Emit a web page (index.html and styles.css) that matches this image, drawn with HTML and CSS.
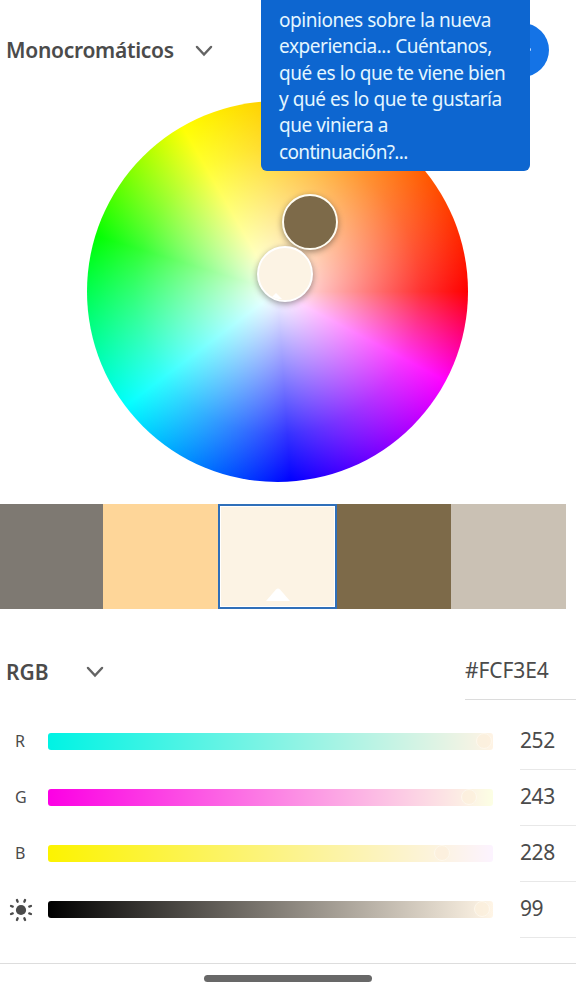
FILE: index.html
```html
<!DOCTYPE html>
<html lang="es">
<head>
<meta charset="utf-8">
<title>Rueda de color</title>
<link rel="stylesheet" href="styles.css">
</head>
<body>
<header class="header">
  <span class="harmony">Monocromáticos</span>
  <svg class="chevron" viewBox="0 0 18 12"><path d="M2 2l7 7.5 7-7.5"/></svg>
  <span class="help"><span class="help-mark"></span></span>
</header>
<aside class="tooltip">
  <p>opiniones sobre la nueva</p>
  <p>experiencia... Cuéntanos,</p>
  <p>qué es lo que te viene bien</p>
  <p>y qué es lo que te gustaría</p>
  <p>que viniera a</p>
  <p class="tip-end">continuación?...</p>
</aside>
<main>
  <div class="wheel">
    <span class="marker marker-brown"></span>
    <span class="marker marker-cream"><svg viewBox="0 0 24 12"><path d="M0 12L12 0l12 12z"/></svg></span>
  </div>
  <div class="swatches">
    <div class="swatch gray"></div>
    <div class="swatch peach"></div>
    <div class="swatch cream"><svg viewBox="0 0 24 13"><path d="M0 13L10 1.5q2-2 4 0L24 13z"/></svg></div>
    <div class="swatch brown"></div>
    <div class="swatch stone"></div>
  </div>
  <div class="mode">
    <span class="mode-name">RGB</span>
    <svg class="chevron" viewBox="0 0 18 12"><path d="M2 2l7 7.5 7-7.5"/></svg>
    <span class="hex">#FCF3E4</span>
  </div>
  <div class="row"><span class="label">R</span><div class="track red"><i class="knob"></i></div><span class="value">252</span></div>
  <div class="row"><span class="label">G</span><div class="track green"><i class="knob"></i></div><span class="value">243</span></div>
  <div class="row"><span class="label">B</span><div class="track blue"><i class="knob"></i></div><span class="value">228</span></div>
  <div class="row">
    <svg class="sun" viewBox="-12 -12 24 24"><circle r="5.1"/><path d="M8.3-3.4l1.6-.6M3.4-8.3l.6-1.6M-3.4-8.3l-.6-1.6M-8.3-3.4l-1.6-.6M-8.3 3.4l-1.6 .6M-3.4 8.3l-.6 1.6M3.4 8.3l.6 1.6M8.3 3.4l1.6 .6"/></svg>
    <div class="track light"><i class="knob"></i></div><span class="value">99</span>
  </div>
</main>
<footer class="footer"><span class="handle"></span></footer>
</body>
</html>
```
FILE: styles.css
```css
* { box-sizing: border-box; }
body {
  margin: 0;
  height: 995px;
  position: relative;
  overflow: hidden;
  background: #fff;
  color: #4b4b4b;
  font-family: "Noto Sans", sans-serif;
}
p { margin: 0; }
.header { height: 101px; display: flex; align-items: center; padding: 0 27px 0 6px; }
.harmony { width: 189px; padding-bottom: 2px; font-size: 21px; font-weight: 600; letter-spacing: -0.28px; white-space: nowrap; }
.chevron { width: 18px; height: 12px; flex: none; fill: none; stroke: #646464; stroke-width: 2.5; stroke-linecap: round; stroke-linejoin: miter; }
.help { width: 54px; height: 54px; margin: -2px 0 0 auto; border-radius: 50%; background: #1473e6; display: flex; align-items: center; justify-content: flex-end; }
.help-mark { width: 2px; height: 3px; margin-right: 18px; border-radius: 50%; background: #c3dcff; }
.tooltip {
  position: absolute; z-index: 3; left: 261px; top: 0; width: 269px; height: 171px;
  padding: 6.8px 18px 0; border-radius: 0 0 6px 6px; background: #0d66d0; color: #e4f6ff;
  font-size: 19px; line-height: 26.4px; letter-spacing: -0.45px; white-space: nowrap;
}
.tip-end { letter-spacing: -0.65px; }
.wheel {
  position: relative; width: 381px; height: 381px; margin: 0 0 22px 87px; border-radius: 50%;
  background:
    radial-gradient(closest-side, #fff, rgba(255,255,255,.72) 25%, rgba(255,255,255,.46) 50%, rgba(255,255,255,.2) 75%, rgba(255,255,255,0)),
    conic-gradient(#ffc800 0deg, #ffa000 20deg, #ff6a00 45deg, #f00 90deg, #f0f 118deg, #00f 176deg, #0ff 233deg, #0f0 287deg, #ff0 330deg, #ffd800 352deg, #ffc800 360deg);
}
.marker { position: absolute; width: 56px; height: 56px; border-radius: 50%; border: 2.5px solid #fffdf3; box-shadow: 0 2px 6px rgba(0,0,0,.4); overflow: hidden; }
.marker-brown { left: 195px; top: 93px; background: #7d6a49; }
.marker-cream { left: 170px; top: 145px; background: #fcf3e4; border-color: #fff; }
.marker svg { position: absolute; left: 11px; bottom: 0; width: 12px; height: 8px; fill: #fff; }
.swatches { display: grid; grid-template-columns: 103px 115px 119px 114px 115px; height: 105px; }
.gray { background: #7e7972; }
.peach { background: #fed699; }
.cream { background: #fcf3e4; border: 2px solid #2f6fb9; box-shadow: inset 0 0 0 1px #fff; display: flex; align-items: flex-end; justify-content: center; padding-bottom: 6px; }
.cream svg { width: 24px; height: 13px; fill: #fff; }
.brown { background: #7d6a49; }
.stone { background: #cac1b4; }
.mode { display: flex; align-items: center; height: 91px; padding-left: 6px; padding-top: 35px; }
.mode-name { width: 80px; font-size: 21px; font-weight: 600; }
.hex { width: 111px; height: 56px; margin-left: auto; border-bottom: 1px solid #dcdcdc; font-size: 21px; letter-spacing: -0.1px; line-height: 52px; white-space: nowrap; }
.row { display: flex; align-items: center; height: 56px; padding-bottom: 1px; }
.mode + .row { margin-top: 14px; }
.label { width: 48px; padding: 0 0 1px 15px; font-size: 16px; line-height: 20px; }
.sun { width: 24px; height: 24px; margin: 0 15px 0 9px; fill: #4b4b4b; stroke: #4b4b4b; stroke-width: 0; }
.sun path { stroke-width: 2.4; stroke-linecap: round; }
.track { position: relative; width: 445px; height: 17px; border-radius: 3px; }
.red { background: linear-gradient(90deg, #00f3e4, #fff3e4); }
.green { background: linear-gradient(90deg, #fc00e4, #fcffe4); }
.blue { background: linear-gradient(90deg, #fcf300, #fcf3ff); }
.light { background: linear-gradient(90deg, #000, #fff5e6); }
.knob { position: absolute; top: 0; right: 1px; width: 16px; height: 16px; border: 1px solid #fffaf0; border-radius: 50%; background: #fcf0dd; opacity: .75; }
.green .knob { right: 16px; }
.blue .knob { right: 43px; }
.light .knob { right: 3px; }
.value { align-self: stretch; flex: 1; margin: 0 0 -1px 27px; border-bottom: 1px solid #e8e8e8; font-size: 21px; letter-spacing: -0.4px; line-height: 52px; }
.footer { position: absolute; left: 0; right: 0; bottom: 0; height: 32px; border-top: 1px solid #ddd; display: flex; justify-content: center; padding-top: 11px; }
.handle { width: 168px; height: 7px; border-radius: 4px; background: #686868; }
```
